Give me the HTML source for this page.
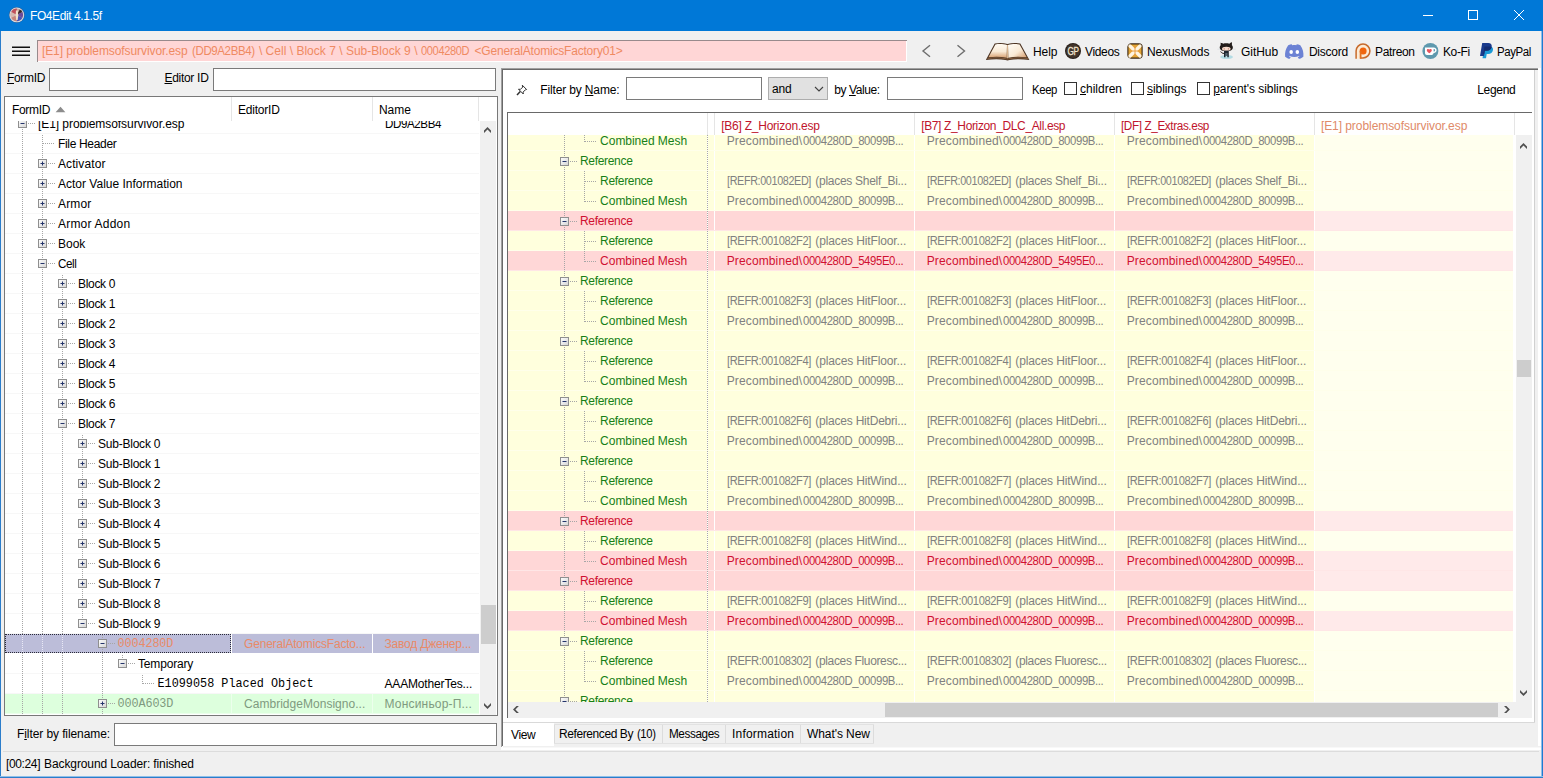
<!DOCTYPE html>
<html lang="en"><head><meta charset="utf-8"><title>FO4Edit 4.1.5f</title><style>
html,body{margin:0;padding:0}
body{width:1543px;height:778px;overflow:hidden;background:#f0f0f0;position:relative;font:12px/20px "Liberation Sans", "DejaVu Sans", sans-serif;color:#000}
body div,body svg,body span.t{position:absolute;display:block}
span.t{white-space:pre;height:20px;line-height:20px}
span.m{font-family:"Liberation Mono", "DejaVu Sans Mono", monospace;transform:scaleY(1.08);transform-origin:0 14px}
.clip{overflow:hidden}
u{text-decoration:underline;text-underline-offset:1px}
</style></head>
<body>
<svg style="left:0;top:0" width="0" height="0"><defs><linearGradient id="bg" x1="0" y1="0" x2="1" y2="1"><stop offset="0" stop-color="#fff"/><stop offset="1" stop-color="#d4d4d4"/></linearGradient></defs></svg>
<div style="left:0px;top:0px;width:1543px;height:31px;background:#0078d7;"></div>
<div style="left:0px;top:31px;width:1px;height:747px;background:#2b7dcb;"></div>
<div style="left:1542px;top:31px;width:1px;height:747px;background:#1f7ad0;"></div>
<div style="left:1541px;top:31px;width:1px;height:747px;background:#8dbde9;"></div>
<div style="left:0px;top:777px;width:1543px;height:1px;background:#2b7dcb;"></div>
<div style="left:0px;top:776px;width:1543px;height:1px;background:#8fbfe8;"></div>
<svg style="left:8px;top:6px" width="18" height="18" viewBox="0 0 18 18"><circle cx="8.800" cy="8.900" r="8" fill="#2a5f9a"/><circle cx="8.800" cy="8.900" r="7.400" fill="#d9dce0"/><circle cx="8.800" cy="8.900" r="6.300" fill="#c8a8a0"/><path d="M8.800 2.600a6.300 6.300 0 0 0-5.600 3.400l5.600 2.900z" fill="#c0505a"/><path d="M8.800 8.900l5.600-2.900a6.300 6.300 0 0 0-2.600-2.600z" fill="#3a2a2a"/><path d="M8.800 8.900l5.600 2.900a6.300 6.300 0 0 0 0-5.800z" fill="#6a4a9a"/><path d="M8.800 8.900v6.300a6.300 6.300 0 0 0 5.600-3.400z" fill="#4a55b5"/><path d="M8.800 8.900l-5.600 2.900a6.300 6.300 0 0 0 5.600 3.400z" fill="#c9857a"/><path d="M8.800 8.900L3.200 6a6.300 6.300 0 0 0 0 5.800z" fill="#d8b8b0"/><path d="M8 4.500h1.800l.5 5-.6 4.500H8.200L7.600 9.500z" fill="#f0e2cc"/></svg>
<span class="t" style="left:29.8px;top:6px;color:#fff;letter-spacing:-0.400px;transform:scaleX(0.9976);transform-origin:0 0;">FO4Edit 4.1.5f</span>
<svg style="left:1415px;top:0" width="128" height="31" viewBox="0 0 128 31" fill="none" stroke="#fff" stroke-width="1"><path d="M8 15.5h10"/><rect x="53.5" y="10.5" width="9" height="9"/><path d="M99 10l10 10M109 10l-10 10"/></svg>
<svg style="left:12px;top:46px" width="18" height="10" viewBox="0 0 18 10"><path d="M0 1.25h18M0 5.25h18M0 9.25h18" stroke="#111" stroke-width="1.300"/></svg>
<div style="left:37px;top:40px;width:870px;height:22px;background:#ffd6d6;box-shadow:inset 1px 1px 0 #988a8c,inset -1px -1px 0 #fff;"></div>
<span class="t" style="left:41.9px;top:41px;color:#ef8a62;letter-spacing:-0.088px;">[E1] problemsofsurvivor.esp</span>
<span class="t" style="left:191.8px;top:41px;color:#ef8a62;letter-spacing:-0.400px;transform:scaleX(0.9593);transform-origin:0 0;">(DD9A2BB4)</span>
<span class="t" style="left:258.9px;top:41px;color:#ef8a62;letter-spacing:0.017px;">\ Cell \ Block 7 \ Sub-Block 9 \</span>
<span class="t" style="left:420.9px;top:41px;color:#ef8a62;letter-spacing:-0.400px;transform:scaleX(0.9237);transform-origin:0 0;">0004280D</span>
<span class="t" style="left:474.5px;top:41px;color:#ef8a62;letter-spacing:-0.189px;">&lt;GeneralAtomicsFactory01&gt;</span>
<svg style="left:918px;top:42px" width="52" height="18" viewBox="0 0 52 18" fill="none" stroke="#6e6e6e" stroke-width="1.4"><path d="M12 3.2l-7 5.8 7 5.8"/><path d="M39.5 3.2l7 5.8-7 5.8"/></svg>
<svg style="left:985px;top:41px" width="46" height="20" viewBox="0 0 46 20">
<defs><linearGradient id="pgL" x1="0" y1="0" x2="0" y2="1"><stop offset="0" stop-color="#fffaf2"/><stop offset=".55" stop-color="#f9ead6"/><stop offset="1" stop-color="#d9a273"/></linearGradient>
<linearGradient id="pgR" x1="0" y1="0" x2="1" y2="1"><stop offset="0" stop-color="#fffdf8"/><stop offset=".55" stop-color="#f9ead6"/><stop offset="1" stop-color="#d39a6a"/></linearGradient></defs>
<path d="M.8 18.900L9.700 2.500C13.500 1.600 18.500 1.700 22.500 3 26.500 1.700 31.500 1.600 35.300 2.500L44.400 18.900C37 18.100 30 18.100 24.500 18.900L22.500 19.400 20.500 18.900C15 18.100 8 18.100 .8 18.900z" fill="#4c3423"/>
<path d="M3.500 16.300L10.400 3.400C14 2.700 18.500 2.800 22 4.100L21.700 16.700C16 15.500 9.500 15.400 3.500 16.300z" fill="url(#pgL)"/>
<path d="M41.700 16.300L34.600 3.400C31 2.700 26.500 2.800 23 4.100L23.300 16.700C29 15.500 35.500 15.400 41.700 16.300z" fill="url(#pgR)"/>
<path d="M22 4.100l-.3 12.600 .8 .9 .8-.9L23 4.100z" fill="#d6b38e"/>
<path d="M2.600 17.500c6.200-1 13-.9 18.900 .4h2c5.900-1.300 12.700-1.400 19.300-.4" stroke="#8b623f" stroke-width=".9" fill="none"/>
</svg>
<span class="t" style="left:1033.0px;top:42px;letter-spacing:-0.045px;">Help</span>
<svg style="left:1065px;top:43px" width="16" height="16" viewBox="0 0 16 16"><circle cx="8" cy="8" r="8" fill="#2a201a"/><circle cx="8" cy="8" r="6.900" fill="#43352b"/><text transform="translate(8 11.700) scale(.78 1)" text-anchor="middle" font-family="Liberation Sans, sans-serif" font-size="10.500" fill="#f2e6d0" stroke="#f2e6d0" stroke-width=".3" letter-spacing="-0.5">GP</text></svg>
<span class="t" style="left:1085.1px;top:42px;letter-spacing:-0.379px;">Videos</span>
<svg style="left:1127px;top:43px" width="16" height="16" viewBox="0 0 16 16"><defs><radialGradient id="nx" cx=".5" cy=".5" r=".6"><stop offset="0" stop-color="#f0a848"/><stop offset="1" stop-color="#dba22e"/></radialGradient></defs><rect x=".9" y=".9" width="14.200" height="14.200" rx="3.200" fill="url(#nx)" stroke="#3a2614" stroke-width="1.100"/><path d="M3 3l10 10M13 3L3 13" stroke="#fff4e2" stroke-width="3.200" stroke-linecap="round"/><path d="M8 3v10M3 8h10" stroke="#e89a3a" stroke-width=".9"/></svg>
<span class="t" style="left:1147.0px;top:42px;letter-spacing:-0.117px;">NexusMods</span>
<svg style="left:1217px;top:40px" width="20" height="20" viewBox="0 0 20 20"><ellipse cx="9.600" cy="17" rx="6.400" ry="2" fill="#b4dce4"/><path d="M3.800 2l2.300 1.700c1.900-.5 4.300-.5 6.200 0L14.600 2c.5 1.300 .5 2.300 .2 3.100 .9 1 1.200 2 1 3.200-.4 2.100-2.600 2.800-6.500 2.800s-6.100-.7-6.500-2.800c-.2-1.200 .1-2.200 1-3.200-.3-.8-.3-1.800 .2-3.100z" fill="#221c1a"/><ellipse cx="9.300" cy="8.700" rx="4.300" ry="2" fill="#f7dccd"/><ellipse cx="7.200" cy="8.800" rx=".6" ry=".9" fill="#c58b7c"/><ellipse cx="11.400" cy="8.800" rx=".6" ry=".9" fill="#c58b7c"/><path d="M7 10.800h4.800v6.400h-1.500v-1.500h-1.800v1.500H7z" fill="#1d2730"/><rect x="8.300" y="13" width="2.200" height="3" fill="#56646e"/><path d="M7.200 13.400c-1.900 .3-2.300-.9-3.700-1.700" stroke="#221c1a" stroke-width="1" fill="none"/><path d="M.5 9.200h2.500M16.200 9.200h2.500" stroke="#cdd6da" stroke-width=".5"/></svg>
<span class="t" style="left:1241.0px;top:42px;letter-spacing:-0.058px;">GitHub</span>
<svg style="left:1284px;top:44px" width="20.500" height="15" viewBox="0 0 22 16"><path d="M4.500 1.300C6 .6 7.300 .3 8.300 .2l.5 1c1.500-.2 2.900-.2 4.400 0l.5-1c1 .1 2.300 .4 3.800 1.100 2.800 4 3.700 8 3.300 12.200-1.700 1.300-3.300 2-4.900 2.400l-1.100-1.800c.7-.2 1.300-.5 1.900-.9l-.5-.3c-3.300 1.500-6.900 1.500-10.400 0l-.5 .3c.6 .4 1.200 .7 1.900 .9l-1.100 1.800c-1.600-.4-3.200-1.100-4.900-2.400C.8 9.300 1.700 5.300 4.500 1.300z" fill="#6c82d4"/><ellipse cx="7.700" cy="8.600" rx="1.900" ry="2.100" fill="#fff"/><ellipse cx="14.300" cy="8.600" rx="1.900" ry="2.100" fill="#fff"/></svg>
<span class="t" style="left:1308.9px;top:42px;letter-spacing:-0.225px;">Discord</span>
<svg style="left:1354px;top:42px" width="18" height="18" viewBox="0 0 18 18"><path d="M2 16.700V9a7 7 0 1 1 7 7H6v.7z" fill="#fcebd6"/><path d="M2.100 16.700V9a6.900 6.900 0 1 1 6.900 6.900H6.100" fill="none" stroke="#c76a2b" stroke-width="1.500"/><circle cx="9.100" cy="9" r="3.500" fill="#f0650e"/><path d="M5.700 9h1.800v7.700H5.700z" fill="#e4711e"/></svg>
<span class="t" style="left:1375.1px;top:42px;letter-spacing:-0.347px;">Patreon</span>
<svg style="left:1422px;top:43px" width="17" height="16" viewBox="0 0 17 16"><circle cx="8.400" cy="8" r="8" fill="#5f99ae"/><path d="M3 4.600h8.300c2.600 0 3.300 1.500 3.300 2.700s-.9 2.700-3 2.700c-.3 1.400-1.200 2-2.400 2H5c-1.300 0-2-.8-2-2z" fill="#fff"/><path d="M11.600 6v2.600c.9 0 1.500-.5 1.500-1.300S12.500 6 11.600 6z" fill="#5f99ae"/><path d="M7.300 10.300C5.700 9 4.800 8.200 4.800 7.200c0-.8.600-1.300 1.300-1.300.5 0 .9.200 1.200.7.300-.5.700-.7 1.200-.7.700 0 1.300.5 1.300 1.300 0 1-.9 1.800-2.500 3.100z" fill="#e8525c"/></svg>
<span class="t" style="left:1443.0px;top:42px;letter-spacing:-0.394px;">Ko-Fi</span>
<svg style="left:1479px;top:42px" width="15" height="17" viewBox="0 0 15 17"><path d="M5.500 4.500h5.200c2.400 0 3.700 1.400 3.300 3.600-.5 2.700-2.300 3.900-4.800 3.900H7.700L7 16.300H3.500z" fill="#1a9ad6"/><path d="M3.200 1h6c2.500 0 3.900 1.400 3.500 3.700-.5 2.800-2.400 4-5 4H5.800L5 14H1z" fill="#1a3a8c"/><path d="M5.500 4.500h5.200c.8 0 1.500.2 2 .5-.6 2.600-2.500 3.700-5 3.700H5.800l-.6 3.300h-.9z" fill="#142c70"/></svg>
<span class="t" style="left:1497.0px;top:42px;letter-spacing:-0.400px;transform:scaleX(0.9545);transform-origin:0 0;">PayPal</span>
<span class="t" style="left:7.0px;top:68px;letter-spacing:-0.333px;"><u>F</u>ormID</span>
<div style="left:49px;top:68px;width:89px;height:23px;background:#fff;box-shadow:inset 0 0 0 1px #7a7a7a;"></div>
<span class="t" style="left:164.5px;top:68px;letter-spacing:-0.298px;"><u>E</u>ditor ID</span>
<div style="left:213px;top:68px;width:283px;height:23px;background:#fff;box-shadow:inset 0 0 0 1px #7a7a7a;"></div>
<div style="left:4px;top:96px;width:494px;height:620px;background:#fff;box-shadow:inset 0 0 0 1px #787878;"></div>
<div class="clip" style="left:5px;top:121px;width:475px;height:594px">
<div style="left:0;top:12px;width:474px;height:1px;background:#f7f7f7"></div>
<div style="left:0;top:32px;width:474px;height:1px;background:#f7f7f7"></div>
<div style="left:0;top:52px;width:474px;height:1px;background:#f7f7f7"></div>
<div style="left:0;top:72px;width:474px;height:1px;background:#f7f7f7"></div>
<div style="left:0;top:92px;width:474px;height:1px;background:#f7f7f7"></div>
<div style="left:0;top:112px;width:474px;height:1px;background:#f7f7f7"></div>
<div style="left:0;top:132px;width:474px;height:1px;background:#f7f7f7"></div>
<div style="left:0;top:152px;width:474px;height:1px;background:#f7f7f7"></div>
<div style="left:0;top:172px;width:474px;height:1px;background:#f7f7f7"></div>
<div style="left:0;top:192px;width:474px;height:1px;background:#f7f7f7"></div>
<div style="left:0;top:212px;width:474px;height:1px;background:#f7f7f7"></div>
<div style="left:0;top:232px;width:474px;height:1px;background:#f7f7f7"></div>
<div style="left:0;top:252px;width:474px;height:1px;background:#f7f7f7"></div>
<div style="left:0;top:272px;width:474px;height:1px;background:#f7f7f7"></div>
<div style="left:0;top:292px;width:474px;height:1px;background:#f7f7f7"></div>
<div style="left:0;top:312px;width:474px;height:1px;background:#f7f7f7"></div>
<div style="left:0;top:332px;width:474px;height:1px;background:#f7f7f7"></div>
<div style="left:0;top:352px;width:474px;height:1px;background:#f7f7f7"></div>
<div style="left:0;top:372px;width:474px;height:1px;background:#f7f7f7"></div>
<div style="left:0;top:392px;width:474px;height:1px;background:#f7f7f7"></div>
<div style="left:0;top:412px;width:474px;height:1px;background:#f7f7f7"></div>
<div style="left:0;top:432px;width:474px;height:1px;background:#f7f7f7"></div>
<div style="left:0;top:452px;width:474px;height:1px;background:#f7f7f7"></div>
<div style="left:0;top:472px;width:474px;height:1px;background:#f7f7f7"></div>
<div style="left:0;top:492px;width:474px;height:1px;background:#f7f7f7"></div>
<div style="left:0;top:512px;width:474px;height:1px;background:#f7f7f7"></div>
<div style="left:0px;top:513px;width:226px;height:19px;background:#bcbdd9;outline:1px dotted #2a2a38;outline-offset:-1px"></div>
<div style="left:227px;top:513px;width:140px;height:19px;background:#bcbdd9"></div>
<div style="left:368px;top:513px;width:106px;height:19px;background:#bcbdd9"></div>
<div style="left:0;top:552px;width:474px;height:1px;background:#f7f7f7"></div>
<div style="left:0;top:572px;width:474px;height:1px;background:#f7f7f7"></div>
<div style="left:0;top:573px;width:474px;height:20px;background:#ecffec"></div>
<div style="left:0px;top:573px;width:226px;height:19px;background:#ddffdd"></div>
<div style="left:227px;top:573px;width:140px;height:19px;background:#ddffdd"></div>
<div style="left:368px;top:573px;width:106px;height:19px;background:#ddffdd"></div>
<div style="left:17px;top:8px;width:1px;height:585px;background:repeating-linear-gradient(to bottom,#a6a6a6 0 1px,transparent 1px 2px);background-position:0 0px"></div>
<div style="left:37px;top:13px;width:1px;height:580px;background:repeating-linear-gradient(to bottom,#a6a6a6 0 1px,transparent 1px 2px);background-position:0 -1px"></div>
<div style="left:57px;top:153px;width:1px;height:440px;background:repeating-linear-gradient(to bottom,#a6a6a6 0 1px,transparent 1px 2px);background-position:0 -1px"></div>
<div style="left:77px;top:313px;width:1px;height:190px;background:repeating-linear-gradient(to bottom,#a6a6a6 0 1px,transparent 1px 2px);background-position:0 -1px"></div>
<div style="left:97px;top:513px;width:1px;height:80px;background:repeating-linear-gradient(to bottom,#a6a6a6 0 1px,transparent 1px 2px);background-position:0 -1px"></div>
<div style="left:117px;top:533px;width:1px;height:10px;background:repeating-linear-gradient(to bottom,#a6a6a6 0 1px,transparent 1px 2px);background-position:0 -1px"></div>
<div style="left:137px;top:553px;width:1px;height:10px;background:repeating-linear-gradient(to bottom,#a6a6a6 0 1px,transparent 1px 2px);background-position:0 -1px"></div>
<div style="left:17px;top:514px;width:1px;height:17px;background:repeating-linear-gradient(to bottom,#e9e9f6 0 1px,transparent 1px 2px);background-position:0 0px"></div>
<div style="left:37px;top:514px;width:1px;height:17px;background:repeating-linear-gradient(to bottom,#e9e9f6 0 1px,transparent 1px 2px);background-position:0 0px"></div>
<div style="left:57px;top:514px;width:1px;height:17px;background:repeating-linear-gradient(to bottom,#e9e9f6 0 1px,transparent 1px 2px);background-position:0 0px"></div>
<div style="left:23px;top:2px;width:7px;height:1px;background:repeating-linear-gradient(to right,#a6a6a6 0 1px,transparent 1px 2px)"></div>
<svg style="left:13px;top:-2px" width="9" height="9" viewBox="0 0 9 9"><rect x=".5" y=".5" width="8" height="8" fill="url(#bg)" stroke="#8f8f8f"/><g stroke="#24356b" stroke-width="1" fill="none"><path d="M2.500 4.500h4"/></g></svg>
<span class="t" style="left:33.0px;top:-7px;letter-spacing:-0.062px;">[E1] problemsofsurvivor.esp</span>
<div style="left:38px;top:22px;width:12px;height:1px;background:repeating-linear-gradient(to right,#a6a6a6 0 1px,transparent 1px 2px)"></div>
<span class="t" style="left:53.0px;top:13px;letter-spacing:-0.330px;">File Header</span>
<div style="left:43px;top:42px;width:7px;height:1px;background:repeating-linear-gradient(to right,#a6a6a6 0 1px,transparent 1px 2px)"></div>
<svg style="left:33px;top:38px" width="9" height="9" viewBox="0 0 9 9"><rect x=".5" y=".5" width="8" height="8" fill="url(#bg)" stroke="#8f8f8f"/><g stroke="#24356b" stroke-width="1" fill="none"><path d="M2.500 4.500h4"/><path d="M4.500 2.500v4"/></g></svg>
<span class="t" style="left:53.0px;top:33px;letter-spacing:0.091px;">Activator</span>
<div style="left:43px;top:62px;width:7px;height:1px;background:repeating-linear-gradient(to right,#a6a6a6 0 1px,transparent 1px 2px)"></div>
<svg style="left:33px;top:58px" width="9" height="9" viewBox="0 0 9 9"><rect x=".5" y=".5" width="8" height="8" fill="url(#bg)" stroke="#8f8f8f"/><g stroke="#24356b" stroke-width="1" fill="none"><path d="M2.500 4.500h4"/><path d="M4.500 2.500v4"/></g></svg>
<span class="t" style="left:53.0px;top:53px;letter-spacing:-0.000px;">Actor Value Information</span>
<div style="left:43px;top:82px;width:7px;height:1px;background:repeating-linear-gradient(to right,#a6a6a6 0 1px,transparent 1px 2px)"></div>
<svg style="left:33px;top:78px" width="9" height="9" viewBox="0 0 9 9"><rect x=".5" y=".5" width="8" height="8" fill="url(#bg)" stroke="#8f8f8f"/><g stroke="#24356b" stroke-width="1" fill="none"><path d="M2.500 4.500h4"/><path d="M4.500 2.500v4"/></g></svg>
<span class="t" style="left:53.0px;top:73px;letter-spacing:0.167px;">Armor</span>
<div style="left:43px;top:102px;width:7px;height:1px;background:repeating-linear-gradient(to right,#a6a6a6 0 1px,transparent 1px 2px)"></div>
<svg style="left:33px;top:98px" width="9" height="9" viewBox="0 0 9 9"><rect x=".5" y=".5" width="8" height="8" fill="url(#bg)" stroke="#8f8f8f"/><g stroke="#24356b" stroke-width="1" fill="none"><path d="M2.500 4.500h4"/><path d="M4.500 2.500v4"/></g></svg>
<span class="t" style="left:53.0px;top:93px;letter-spacing:0.209px;">Armor Addon</span>
<div style="left:43px;top:122px;width:7px;height:1px;background:repeating-linear-gradient(to right,#a6a6a6 0 1px,transparent 1px 2px)"></div>
<svg style="left:33px;top:118px" width="9" height="9" viewBox="0 0 9 9"><rect x=".5" y=".5" width="8" height="8" fill="url(#bg)" stroke="#8f8f8f"/><g stroke="#24356b" stroke-width="1" fill="none"><path d="M2.500 4.500h4"/><path d="M4.500 2.500v4"/></g></svg>
<span class="t" style="left:53.0px;top:113px;letter-spacing:-0.013px;">Book</span>
<div style="left:43px;top:142px;width:7px;height:1px;background:repeating-linear-gradient(to right,#a6a6a6 0 1px,transparent 1px 2px)"></div>
<svg style="left:33px;top:138px" width="9" height="9" viewBox="0 0 9 9"><rect x=".5" y=".5" width="8" height="8" fill="url(#bg)" stroke="#8f8f8f"/><g stroke="#24356b" stroke-width="1" fill="none"><path d="M2.500 4.500h4"/></g></svg>
<span class="t" style="left:53.0px;top:133px;letter-spacing:-0.400px;transform:scaleX(0.9700);transform-origin:0 0;">Cell</span>
<div style="left:63px;top:162px;width:7px;height:1px;background:repeating-linear-gradient(to right,#a6a6a6 0 1px,transparent 1px 2px)"></div>
<svg style="left:53px;top:158px" width="9" height="9" viewBox="0 0 9 9"><rect x=".5" y=".5" width="8" height="8" fill="url(#bg)" stroke="#8f8f8f"/><g stroke="#24356b" stroke-width="1" fill="none"><path d="M2.500 4.500h4"/><path d="M4.500 2.500v4"/></g></svg>
<span class="t" style="left:73.0px;top:153px;letter-spacing:-0.322px;">Block 0</span>
<div style="left:63px;top:182px;width:7px;height:1px;background:repeating-linear-gradient(to right,#a6a6a6 0 1px,transparent 1px 2px)"></div>
<svg style="left:53px;top:178px" width="9" height="9" viewBox="0 0 9 9"><rect x=".5" y=".5" width="8" height="8" fill="url(#bg)" stroke="#8f8f8f"/><g stroke="#24356b" stroke-width="1" fill="none"><path d="M2.500 4.500h4"/><path d="M4.500 2.500v4"/></g></svg>
<span class="t" style="left:73.0px;top:173px;letter-spacing:-0.322px;">Block 1</span>
<div style="left:63px;top:202px;width:7px;height:1px;background:repeating-linear-gradient(to right,#a6a6a6 0 1px,transparent 1px 2px)"></div>
<svg style="left:53px;top:198px" width="9" height="9" viewBox="0 0 9 9"><rect x=".5" y=".5" width="8" height="8" fill="url(#bg)" stroke="#8f8f8f"/><g stroke="#24356b" stroke-width="1" fill="none"><path d="M2.500 4.500h4"/><path d="M4.500 2.500v4"/></g></svg>
<span class="t" style="left:73.0px;top:193px;letter-spacing:-0.322px;">Block 2</span>
<div style="left:63px;top:222px;width:7px;height:1px;background:repeating-linear-gradient(to right,#a6a6a6 0 1px,transparent 1px 2px)"></div>
<svg style="left:53px;top:218px" width="9" height="9" viewBox="0 0 9 9"><rect x=".5" y=".5" width="8" height="8" fill="url(#bg)" stroke="#8f8f8f"/><g stroke="#24356b" stroke-width="1" fill="none"><path d="M2.500 4.500h4"/><path d="M4.500 2.500v4"/></g></svg>
<span class="t" style="left:73.0px;top:213px;letter-spacing:-0.322px;">Block 3</span>
<div style="left:63px;top:242px;width:7px;height:1px;background:repeating-linear-gradient(to right,#a6a6a6 0 1px,transparent 1px 2px)"></div>
<svg style="left:53px;top:238px" width="9" height="9" viewBox="0 0 9 9"><rect x=".5" y=".5" width="8" height="8" fill="url(#bg)" stroke="#8f8f8f"/><g stroke="#24356b" stroke-width="1" fill="none"><path d="M2.500 4.500h4"/><path d="M4.500 2.500v4"/></g></svg>
<span class="t" style="left:73.0px;top:233px;letter-spacing:-0.322px;">Block 4</span>
<div style="left:63px;top:262px;width:7px;height:1px;background:repeating-linear-gradient(to right,#a6a6a6 0 1px,transparent 1px 2px)"></div>
<svg style="left:53px;top:258px" width="9" height="9" viewBox="0 0 9 9"><rect x=".5" y=".5" width="8" height="8" fill="url(#bg)" stroke="#8f8f8f"/><g stroke="#24356b" stroke-width="1" fill="none"><path d="M2.500 4.500h4"/><path d="M4.500 2.500v4"/></g></svg>
<span class="t" style="left:73.0px;top:253px;letter-spacing:-0.322px;">Block 5</span>
<div style="left:63px;top:282px;width:7px;height:1px;background:repeating-linear-gradient(to right,#a6a6a6 0 1px,transparent 1px 2px)"></div>
<svg style="left:53px;top:278px" width="9" height="9" viewBox="0 0 9 9"><rect x=".5" y=".5" width="8" height="8" fill="url(#bg)" stroke="#8f8f8f"/><g stroke="#24356b" stroke-width="1" fill="none"><path d="M2.500 4.500h4"/><path d="M4.500 2.500v4"/></g></svg>
<span class="t" style="left:73.0px;top:273px;letter-spacing:-0.322px;">Block 6</span>
<div style="left:63px;top:302px;width:7px;height:1px;background:repeating-linear-gradient(to right,#a6a6a6 0 1px,transparent 1px 2px)"></div>
<svg style="left:53px;top:298px" width="9" height="9" viewBox="0 0 9 9"><rect x=".5" y=".5" width="8" height="8" fill="url(#bg)" stroke="#8f8f8f"/><g stroke="#24356b" stroke-width="1" fill="none"><path d="M2.500 4.500h4"/></g></svg>
<span class="t" style="left:73.0px;top:293px;letter-spacing:-0.322px;">Block 7</span>
<div style="left:83px;top:322px;width:7px;height:1px;background:repeating-linear-gradient(to right,#a6a6a6 0 1px,transparent 1px 2px)"></div>
<svg style="left:73px;top:318px" width="9" height="9" viewBox="0 0 9 9"><rect x=".5" y=".5" width="8" height="8" fill="url(#bg)" stroke="#8f8f8f"/><g stroke="#24356b" stroke-width="1" fill="none"><path d="M2.500 4.500h4"/><path d="M4.500 2.500v4"/></g></svg>
<span class="t" style="left:93.0px;top:313px;letter-spacing:-0.227px;">Sub-Block 0</span>
<div style="left:83px;top:342px;width:7px;height:1px;background:repeating-linear-gradient(to right,#a6a6a6 0 1px,transparent 1px 2px)"></div>
<svg style="left:73px;top:338px" width="9" height="9" viewBox="0 0 9 9"><rect x=".5" y=".5" width="8" height="8" fill="url(#bg)" stroke="#8f8f8f"/><g stroke="#24356b" stroke-width="1" fill="none"><path d="M2.500 4.500h4"/><path d="M4.500 2.500v4"/></g></svg>
<span class="t" style="left:93.0px;top:333px;letter-spacing:-0.227px;">Sub-Block 1</span>
<div style="left:83px;top:362px;width:7px;height:1px;background:repeating-linear-gradient(to right,#a6a6a6 0 1px,transparent 1px 2px)"></div>
<svg style="left:73px;top:358px" width="9" height="9" viewBox="0 0 9 9"><rect x=".5" y=".5" width="8" height="8" fill="url(#bg)" stroke="#8f8f8f"/><g stroke="#24356b" stroke-width="1" fill="none"><path d="M2.500 4.500h4"/><path d="M4.500 2.500v4"/></g></svg>
<span class="t" style="left:93.0px;top:353px;letter-spacing:-0.227px;">Sub-Block 2</span>
<div style="left:83px;top:382px;width:7px;height:1px;background:repeating-linear-gradient(to right,#a6a6a6 0 1px,transparent 1px 2px)"></div>
<svg style="left:73px;top:378px" width="9" height="9" viewBox="0 0 9 9"><rect x=".5" y=".5" width="8" height="8" fill="url(#bg)" stroke="#8f8f8f"/><g stroke="#24356b" stroke-width="1" fill="none"><path d="M2.500 4.500h4"/><path d="M4.500 2.500v4"/></g></svg>
<span class="t" style="left:93.0px;top:373px;letter-spacing:-0.227px;">Sub-Block 3</span>
<div style="left:83px;top:402px;width:7px;height:1px;background:repeating-linear-gradient(to right,#a6a6a6 0 1px,transparent 1px 2px)"></div>
<svg style="left:73px;top:398px" width="9" height="9" viewBox="0 0 9 9"><rect x=".5" y=".5" width="8" height="8" fill="url(#bg)" stroke="#8f8f8f"/><g stroke="#24356b" stroke-width="1" fill="none"><path d="M2.500 4.500h4"/><path d="M4.500 2.500v4"/></g></svg>
<span class="t" style="left:93.0px;top:393px;letter-spacing:-0.227px;">Sub-Block 4</span>
<div style="left:83px;top:422px;width:7px;height:1px;background:repeating-linear-gradient(to right,#a6a6a6 0 1px,transparent 1px 2px)"></div>
<svg style="left:73px;top:418px" width="9" height="9" viewBox="0 0 9 9"><rect x=".5" y=".5" width="8" height="8" fill="url(#bg)" stroke="#8f8f8f"/><g stroke="#24356b" stroke-width="1" fill="none"><path d="M2.500 4.500h4"/><path d="M4.500 2.500v4"/></g></svg>
<span class="t" style="left:93.0px;top:413px;letter-spacing:-0.227px;">Sub-Block 5</span>
<div style="left:83px;top:442px;width:7px;height:1px;background:repeating-linear-gradient(to right,#a6a6a6 0 1px,transparent 1px 2px)"></div>
<svg style="left:73px;top:438px" width="9" height="9" viewBox="0 0 9 9"><rect x=".5" y=".5" width="8" height="8" fill="url(#bg)" stroke="#8f8f8f"/><g stroke="#24356b" stroke-width="1" fill="none"><path d="M2.500 4.500h4"/><path d="M4.500 2.500v4"/></g></svg>
<span class="t" style="left:93.0px;top:433px;letter-spacing:-0.227px;">Sub-Block 6</span>
<div style="left:83px;top:462px;width:7px;height:1px;background:repeating-linear-gradient(to right,#a6a6a6 0 1px,transparent 1px 2px)"></div>
<svg style="left:73px;top:458px" width="9" height="9" viewBox="0 0 9 9"><rect x=".5" y=".5" width="8" height="8" fill="url(#bg)" stroke="#8f8f8f"/><g stroke="#24356b" stroke-width="1" fill="none"><path d="M2.500 4.500h4"/><path d="M4.500 2.500v4"/></g></svg>
<span class="t" style="left:93.0px;top:453px;letter-spacing:-0.227px;">Sub-Block 7</span>
<div style="left:83px;top:482px;width:7px;height:1px;background:repeating-linear-gradient(to right,#a6a6a6 0 1px,transparent 1px 2px)"></div>
<svg style="left:73px;top:478px" width="9" height="9" viewBox="0 0 9 9"><rect x=".5" y=".5" width="8" height="8" fill="url(#bg)" stroke="#8f8f8f"/><g stroke="#24356b" stroke-width="1" fill="none"><path d="M2.500 4.500h4"/><path d="M4.500 2.500v4"/></g></svg>
<span class="t" style="left:93.0px;top:473px;letter-spacing:-0.227px;">Sub-Block 8</span>
<div style="left:83px;top:502px;width:7px;height:1px;background:repeating-linear-gradient(to right,#a6a6a6 0 1px,transparent 1px 2px)"></div>
<svg style="left:73px;top:498px" width="9" height="9" viewBox="0 0 9 9"><rect x=".5" y=".5" width="8" height="8" fill="url(#bg)" stroke="#8f8f8f"/><g stroke="#24356b" stroke-width="1" fill="none"><path d="M2.500 4.500h4"/></g></svg>
<span class="t" style="left:93.0px;top:493px;letter-spacing:-0.227px;">Sub-Block 9</span>
<div style="left:103px;top:522px;width:7px;height:1px;background:repeating-linear-gradient(to right,#a6a6a6 0 1px,transparent 1px 2px)"></div>
<svg style="left:93px;top:518px" width="9" height="9" viewBox="0 0 9 9"><rect x=".5" y=".5" width="8" height="8" fill="url(#bg)" stroke="#8f8f8f"/><g stroke="#24356b" stroke-width="1" fill="none"><path d="M2.500 4.500h4"/></g></svg>
<span class="t m" style="left:112.5px;top:513px;color:#e98a68;font-size:11.8px;letter-spacing:-0.104px;">0004280D</span>
<div style="left:123px;top:542px;width:7px;height:1px;background:repeating-linear-gradient(to right,#a6a6a6 0 1px,transparent 1px 2px)"></div>
<svg style="left:113px;top:538px" width="9" height="9" viewBox="0 0 9 9"><rect x=".5" y=".5" width="8" height="8" fill="url(#bg)" stroke="#8f8f8f"/><g stroke="#24356b" stroke-width="1" fill="none"><path d="M2.500 4.500h4"/></g></svg>
<span class="t" style="left:133.0px;top:533px;letter-spacing:-0.165px;">Temporary</span>
<div style="left:138px;top:562px;width:12px;height:1px;background:repeating-linear-gradient(to right,#a6a6a6 0 1px,transparent 1px 2px)"></div>
<span class="t m" style="left:152.5px;top:553px;font-size:11.8px;letter-spacing:0.012px;">E1099058 Placed Object</span>
<div style="left:103px;top:582px;width:7px;height:1px;background:repeating-linear-gradient(to right,#a6a6a6 0 1px,transparent 1px 2px)"></div>
<svg style="left:93px;top:578px" width="9" height="9" viewBox="0 0 9 9"><rect x=".5" y=".5" width="8" height="8" fill="url(#bg)" stroke="#8f8f8f"/><g stroke="#24356b" stroke-width="1" fill="none"><path d="M2.500 4.500h4"/><path d="M4.500 2.500v4"/></g></svg>
<span class="t m" style="left:112.5px;top:573px;color:#7f9a7f;font-size:11.8px;letter-spacing:-0.104px;">000A603D</span>
<span class="t" style="left:379.5px;top:-7px;letter-spacing:-0.400px;transform:scaleX(0.9628);transform-origin:0 0;">DD9A2BB4</span>
<span class="t" style="left:239.0px;top:513px;color:#e98a68;letter-spacing:-0.185px;">GeneralAtomicsFacto...</span>
<span class="t" style="left:379.5px;top:513px;color:#e98a68;letter-spacing:-0.201px;">Завод Дженер...</span>
<span class="t" style="left:379.5px;top:553px;letter-spacing:-0.162px;">AAAMotherTes...</span>
<span class="t" style="left:239.0px;top:573px;color:#7f9a7f;letter-spacing:0.029px;">CambridgeMonsigno...</span>
<span class="t" style="left:379.5px;top:573px;color:#7f9a7f;letter-spacing:0.187px;">Монсиньор-П...</span>
</div>
<div style="left:5px;top:97px;width:492px;height:24px;background:#fff;"></div>
<div style="left:231px;top:97px;width:1px;height:24px;background:#e5e5e5;"></div>
<div style="left:372px;top:97px;width:1px;height:24px;background:#e5e5e5;"></div>
<div style="left:478px;top:97px;width:1px;height:24px;background:#e5e5e5;"></div>
<span class="t" style="left:12.0px;top:100px;letter-spacing:-0.333px;">FormID</span>
<svg style="left:55px;top:106px" width="11" height="7" viewBox="0 0 11 7"><path d="M.6 6.200L5.500 .8l4.900 5.400z" fill="#8c8c8c"/></svg>
<span class="t" style="left:238.1px;top:100px;letter-spacing:-0.231px;">EditorID</span>
<span class="t" style="left:378.9px;top:100px;letter-spacing:-0.002px;">Name</span>
<div style="left:480px;top:121px;width:16px;height:594px;background:#f0f0f0;"></div>
<div style="left:481px;top:605px;width:15px;height:39px;background:#cdcdcd;"></div>
<svg style="left:484px;top:127px" width="7" height="6" viewBox="0 0 7 6"><path d="M0 3.500L3.500 0 7 3.500V5.900L3.500 2.400 0 5.900z" fill="#505050"/></svg>
<svg style="left:484px;top:702.8px" width="7" height="6" viewBox="0 0 7 6"><path d="M0 2.400L3.500 5.900 7 2.400V0L3.500 3.500 0 0z" fill="#505050"/></svg>
<span class="t" style="left:17.0px;top:724px;letter-spacing:-0.089px;">F<u>i</u>lter by filename:</span>
<div style="left:114px;top:723px;width:383px;height:23px;background:#fff;box-shadow:inset 0 0 0 1px #7a7a7a;"></div>
<div style="left:3px;top:751px;width:1536px;height:1px;background:#dcdcdc;"></div>
<span class="t" style="left:6.0px;top:754px;letter-spacing:-0.371px;">[00:24]</span>
<span class="t" style="left:44.1px;top:754px;letter-spacing:-0.114px;">Background Loader: finished</span>
<div style="left:501px;top:68px;width:1040px;height:682px;background:#fff;"></div>
<div style="left:501px;top:68px;width:1037px;height:1px;background:#a0a0a0;"></div>
<div style="left:501px;top:68px;width:1px;height:679px;background:#a0a0a0;"></div>
<div style="left:502px;top:69px;width:1036px;height:1px;background:#696969;"></div>
<div style="left:502px;top:69px;width:1px;height:677px;background:#696969;"></div>
<div style="left:503px;top:746px;width:1038px;height:1px;background:#f0f0f0;"></div>
<div style="left:1535px;top:70px;width:3px;height:677px;background:#f0f0f0;"></div>
<div style="left:503px;top:747px;width:1038px;height:1px;background:#f8f8f8;"></div>
<div style="left:503px;top:70px;width:1px;height:653px;background:#fff;"></div>
<div style="left:1534px;top:70px;width:1px;height:653px;background:#d0d0d0;"></div>
<div style="left:503px;top:722px;width:1032px;height:1px;background:#d9d9d9;"></div>
<div style="left:503px;top:723px;width:1035px;height:23px;background:#f0f0f0;"></div>
<div style="left:503px;top:723px;width:51px;height:23px;background:#fff;"></div>
<div style="left:554px;top:724px;width:1px;height:20px;background:#dcdcdc;"></div>
<div style="left:662px;top:724px;width:1px;height:20px;background:#dcdcdc;"></div>
<div style="left:725px;top:724px;width:1px;height:20px;background:#dcdcdc;"></div>
<div style="left:800px;top:724px;width:1px;height:20px;background:#dcdcdc;"></div>
<div style="left:873px;top:724px;width:1px;height:20px;background:#dcdcdc;"></div>
<div style="left:554px;top:724px;width:320px;height:1px;background:#e2e2e2;"></div>
<div style="left:554px;top:743px;width:320px;height:1px;background:#e2e2e2;"></div>
<span class="t" style="left:511.0px;top:725px;letter-spacing:-0.373px;">View</span>
<span class="t" style="left:559.1px;top:724px;letter-spacing:-0.400px;transform:scaleX(0.9976);transform-origin:0 0;">Referenced By</span>
<span class="t" style="left:637.3px;top:724px;letter-spacing:-0.400px;transform:scaleX(0.9372);transform-origin:0 0;">(10)</span>
<span class="t" style="left:669.2px;top:724px;letter-spacing:-0.400px;transform:scaleX(0.9769);transform-origin:0 0;">Messages</span>
<span class="t" style="left:732.0px;top:724px;letter-spacing:0.197px;">Information</span>
<span class="t" style="left:807.0px;top:724px;letter-spacing:-0.084px;">What&#x27;s New</span>
<svg style="left:516px;top:84px" width="12" height="12" viewBox="0 0 12 12" fill="none" stroke="#303030" stroke-width="1"><path d="M6.300 1.200l4.300 4.300-1.200 .3-2.300 2.300 .2 1.900-4.800-4.800 1.900 .2 2.300-2.300z" fill="#fff"/><path d="M4.300 7.600L1 11" stroke-width="1.500"/></svg>
<span class="t" style="left:540.2px;top:80px;letter-spacing:-0.137px;">Filter by <u>N</u>ame:</span>
<div style="left:626px;top:77px;width:136px;height:23px;background:#fff;box-shadow:inset 0 0 0 1px #7a7a7a;"></div>
<div style="left:768px;top:77px;width:60px;height:23px;background:#e1e1e1;box-shadow:inset 0 0 0 1px #adadad;"></div>
<span class="t" style="left:772.0px;top:79px;letter-spacing:-0.174px;">and</span>
<svg style="left:814px;top:85px" width="10" height="8" viewBox="0 0 10 8"><path d="M1 2l4 4 4-4" fill="none" stroke="#404040" stroke-width="1.100"/></svg>
<span class="t" style="left:834.2px;top:80px;letter-spacing:-0.394px;">by <u>V</u>alue:</span>
<div style="left:887px;top:77px;width:136px;height:23px;background:#fff;box-shadow:inset 0 0 0 1px #7a7a7a;"></div>
<span class="t" style="left:1032.0px;top:80px;letter-spacing:-0.400px;transform:scaleX(0.9461);transform-origin:0 0;">Keep</span>
<div style="left:1064px;top:82px;width:13px;height:13px;background:#fff;box-shadow:inset 0 0 0 1px #333;"></div>
<div style="left:1131px;top:82px;width:13px;height:13px;background:#fff;box-shadow:inset 0 0 0 1px #333;"></div>
<div style="left:1197px;top:82px;width:13px;height:13px;background:#fff;box-shadow:inset 0 0 0 1px #333;"></div>
<span class="t" style="left:1080.0px;top:79px;letter-spacing:-0.003px;"><u>c</u>hildren</span>
<span class="t" style="left:1147.0px;top:79px;letter-spacing:-0.065px;"><u>s</u>iblings</span>
<span class="t" style="left:1213.2px;top:79px;letter-spacing:-0.063px;"><u>p</u>arent&#x27;s siblings</span>
<span class="t" style="left:1477.2px;top:80px;letter-spacing:-0.290px;">Legend</span>
<div style="left:507px;top:112px;width:1025px;height:1px;background:#696969;"></div>
<div style="left:507px;top:112px;width:1px;height:606px;background:#696969;"></div>
<div class="clip" style="left:508px;top:135px;width:1008px;height:567px">
<div style="left:0px;top:-4px;width:199px;height:19px;background:#ffffdd"></div>
<div style="left:200px;top:-4px;width:6px;height:19px;background:#ffffdd"></div>
<div style="left:207px;top:-4px;width:199px;height:19px;background:#ffffdd"></div>
<div style="left:407px;top:-4px;width:199px;height:19px;background:#ffffdd"></div>
<div style="left:607px;top:-4px;width:199px;height:19px;background:#ffffdd"></div>
<div style="left:807px;top:-4px;width:199px;height:19px;background:#ffffee"></div>
<div style="left:0;top:15px;width:1005px;height:1px;background:#ffffea"></div>
<div style="left:0px;top:16px;width:199px;height:19px;background:#ffffdd"></div>
<div style="left:200px;top:16px;width:6px;height:19px;background:#ffffdd"></div>
<div style="left:207px;top:16px;width:199px;height:19px;background:#ffffdd"></div>
<div style="left:407px;top:16px;width:199px;height:19px;background:#ffffdd"></div>
<div style="left:607px;top:16px;width:199px;height:19px;background:#ffffdd"></div>
<div style="left:807px;top:16px;width:199px;height:19px;background:#ffffee"></div>
<div style="left:0;top:35px;width:1005px;height:1px;background:#ffffea"></div>
<div style="left:0px;top:36px;width:199px;height:19px;background:#ffffdd"></div>
<div style="left:200px;top:36px;width:6px;height:19px;background:#ffffdd"></div>
<div style="left:207px;top:36px;width:199px;height:19px;background:#ffffdd"></div>
<div style="left:407px;top:36px;width:199px;height:19px;background:#ffffdd"></div>
<div style="left:607px;top:36px;width:199px;height:19px;background:#ffffdd"></div>
<div style="left:807px;top:36px;width:199px;height:19px;background:#ffffee"></div>
<div style="left:0;top:55px;width:1005px;height:1px;background:#ffffea"></div>
<div style="left:0px;top:56px;width:199px;height:19px;background:#ffffdd"></div>
<div style="left:200px;top:56px;width:6px;height:19px;background:#ffffdd"></div>
<div style="left:207px;top:56px;width:199px;height:19px;background:#ffffdd"></div>
<div style="left:407px;top:56px;width:199px;height:19px;background:#ffffdd"></div>
<div style="left:607px;top:56px;width:199px;height:19px;background:#ffffdd"></div>
<div style="left:807px;top:56px;width:199px;height:19px;background:#ffffee"></div>
<div style="left:0;top:75px;width:1005px;height:1px;background:#ffffea"></div>
<div style="left:0px;top:76px;width:199px;height:19px;background:#ffd7d7"></div>
<div style="left:200px;top:76px;width:6px;height:19px;background:#ffd7d7"></div>
<div style="left:207px;top:76px;width:199px;height:19px;background:#ffd7d7"></div>
<div style="left:407px;top:76px;width:199px;height:19px;background:#ffd7d7"></div>
<div style="left:607px;top:76px;width:199px;height:19px;background:#ffd7d7"></div>
<div style="left:807px;top:76px;width:199px;height:19px;background:#ffeaea"></div>
<div style="left:0;top:95px;width:1005px;height:1px;background:#ffe6e6"></div>
<div style="left:0px;top:96px;width:199px;height:19px;background:#ffffdd"></div>
<div style="left:200px;top:96px;width:6px;height:19px;background:#ffffdd"></div>
<div style="left:207px;top:96px;width:199px;height:19px;background:#ffffdd"></div>
<div style="left:407px;top:96px;width:199px;height:19px;background:#ffffdd"></div>
<div style="left:607px;top:96px;width:199px;height:19px;background:#ffffdd"></div>
<div style="left:807px;top:96px;width:199px;height:19px;background:#ffffee"></div>
<div style="left:0;top:115px;width:1005px;height:1px;background:#ffffea"></div>
<div style="left:0px;top:116px;width:199px;height:19px;background:#ffd7d7"></div>
<div style="left:200px;top:116px;width:6px;height:19px;background:#ffd7d7"></div>
<div style="left:207px;top:116px;width:199px;height:19px;background:#ffd7d7"></div>
<div style="left:407px;top:116px;width:199px;height:19px;background:#ffd7d7"></div>
<div style="left:607px;top:116px;width:199px;height:19px;background:#ffd7d7"></div>
<div style="left:807px;top:116px;width:199px;height:19px;background:#ffeaea"></div>
<div style="left:0;top:135px;width:1005px;height:1px;background:#ffe6e6"></div>
<div style="left:0px;top:136px;width:199px;height:19px;background:#ffffdd"></div>
<div style="left:200px;top:136px;width:6px;height:19px;background:#ffffdd"></div>
<div style="left:207px;top:136px;width:199px;height:19px;background:#ffffdd"></div>
<div style="left:407px;top:136px;width:199px;height:19px;background:#ffffdd"></div>
<div style="left:607px;top:136px;width:199px;height:19px;background:#ffffdd"></div>
<div style="left:807px;top:136px;width:199px;height:19px;background:#ffffee"></div>
<div style="left:0;top:155px;width:1005px;height:1px;background:#ffffea"></div>
<div style="left:0px;top:156px;width:199px;height:19px;background:#ffffdd"></div>
<div style="left:200px;top:156px;width:6px;height:19px;background:#ffffdd"></div>
<div style="left:207px;top:156px;width:199px;height:19px;background:#ffffdd"></div>
<div style="left:407px;top:156px;width:199px;height:19px;background:#ffffdd"></div>
<div style="left:607px;top:156px;width:199px;height:19px;background:#ffffdd"></div>
<div style="left:807px;top:156px;width:199px;height:19px;background:#ffffee"></div>
<div style="left:0;top:175px;width:1005px;height:1px;background:#ffffea"></div>
<div style="left:0px;top:176px;width:199px;height:19px;background:#ffffdd"></div>
<div style="left:200px;top:176px;width:6px;height:19px;background:#ffffdd"></div>
<div style="left:207px;top:176px;width:199px;height:19px;background:#ffffdd"></div>
<div style="left:407px;top:176px;width:199px;height:19px;background:#ffffdd"></div>
<div style="left:607px;top:176px;width:199px;height:19px;background:#ffffdd"></div>
<div style="left:807px;top:176px;width:199px;height:19px;background:#ffffee"></div>
<div style="left:0;top:195px;width:1005px;height:1px;background:#ffffea"></div>
<div style="left:0px;top:196px;width:199px;height:19px;background:#ffffdd"></div>
<div style="left:200px;top:196px;width:6px;height:19px;background:#ffffdd"></div>
<div style="left:207px;top:196px;width:199px;height:19px;background:#ffffdd"></div>
<div style="left:407px;top:196px;width:199px;height:19px;background:#ffffdd"></div>
<div style="left:607px;top:196px;width:199px;height:19px;background:#ffffdd"></div>
<div style="left:807px;top:196px;width:199px;height:19px;background:#ffffee"></div>
<div style="left:0;top:215px;width:1005px;height:1px;background:#ffffea"></div>
<div style="left:0px;top:216px;width:199px;height:19px;background:#ffffdd"></div>
<div style="left:200px;top:216px;width:6px;height:19px;background:#ffffdd"></div>
<div style="left:207px;top:216px;width:199px;height:19px;background:#ffffdd"></div>
<div style="left:407px;top:216px;width:199px;height:19px;background:#ffffdd"></div>
<div style="left:607px;top:216px;width:199px;height:19px;background:#ffffdd"></div>
<div style="left:807px;top:216px;width:199px;height:19px;background:#ffffee"></div>
<div style="left:0;top:235px;width:1005px;height:1px;background:#ffffea"></div>
<div style="left:0px;top:236px;width:199px;height:19px;background:#ffffdd"></div>
<div style="left:200px;top:236px;width:6px;height:19px;background:#ffffdd"></div>
<div style="left:207px;top:236px;width:199px;height:19px;background:#ffffdd"></div>
<div style="left:407px;top:236px;width:199px;height:19px;background:#ffffdd"></div>
<div style="left:607px;top:236px;width:199px;height:19px;background:#ffffdd"></div>
<div style="left:807px;top:236px;width:199px;height:19px;background:#ffffee"></div>
<div style="left:0;top:255px;width:1005px;height:1px;background:#ffffea"></div>
<div style="left:0px;top:256px;width:199px;height:19px;background:#ffffdd"></div>
<div style="left:200px;top:256px;width:6px;height:19px;background:#ffffdd"></div>
<div style="left:207px;top:256px;width:199px;height:19px;background:#ffffdd"></div>
<div style="left:407px;top:256px;width:199px;height:19px;background:#ffffdd"></div>
<div style="left:607px;top:256px;width:199px;height:19px;background:#ffffdd"></div>
<div style="left:807px;top:256px;width:199px;height:19px;background:#ffffee"></div>
<div style="left:0;top:275px;width:1005px;height:1px;background:#ffffea"></div>
<div style="left:0px;top:276px;width:199px;height:19px;background:#ffffdd"></div>
<div style="left:200px;top:276px;width:6px;height:19px;background:#ffffdd"></div>
<div style="left:207px;top:276px;width:199px;height:19px;background:#ffffdd"></div>
<div style="left:407px;top:276px;width:199px;height:19px;background:#ffffdd"></div>
<div style="left:607px;top:276px;width:199px;height:19px;background:#ffffdd"></div>
<div style="left:807px;top:276px;width:199px;height:19px;background:#ffffee"></div>
<div style="left:0;top:295px;width:1005px;height:1px;background:#ffffea"></div>
<div style="left:0px;top:296px;width:199px;height:19px;background:#ffffdd"></div>
<div style="left:200px;top:296px;width:6px;height:19px;background:#ffffdd"></div>
<div style="left:207px;top:296px;width:199px;height:19px;background:#ffffdd"></div>
<div style="left:407px;top:296px;width:199px;height:19px;background:#ffffdd"></div>
<div style="left:607px;top:296px;width:199px;height:19px;background:#ffffdd"></div>
<div style="left:807px;top:296px;width:199px;height:19px;background:#ffffee"></div>
<div style="left:0;top:315px;width:1005px;height:1px;background:#ffffea"></div>
<div style="left:0px;top:316px;width:199px;height:19px;background:#ffffdd"></div>
<div style="left:200px;top:316px;width:6px;height:19px;background:#ffffdd"></div>
<div style="left:207px;top:316px;width:199px;height:19px;background:#ffffdd"></div>
<div style="left:407px;top:316px;width:199px;height:19px;background:#ffffdd"></div>
<div style="left:607px;top:316px;width:199px;height:19px;background:#ffffdd"></div>
<div style="left:807px;top:316px;width:199px;height:19px;background:#ffffee"></div>
<div style="left:0;top:335px;width:1005px;height:1px;background:#ffffea"></div>
<div style="left:0px;top:336px;width:199px;height:19px;background:#ffffdd"></div>
<div style="left:200px;top:336px;width:6px;height:19px;background:#ffffdd"></div>
<div style="left:207px;top:336px;width:199px;height:19px;background:#ffffdd"></div>
<div style="left:407px;top:336px;width:199px;height:19px;background:#ffffdd"></div>
<div style="left:607px;top:336px;width:199px;height:19px;background:#ffffdd"></div>
<div style="left:807px;top:336px;width:199px;height:19px;background:#ffffee"></div>
<div style="left:0;top:355px;width:1005px;height:1px;background:#ffffea"></div>
<div style="left:0px;top:356px;width:199px;height:19px;background:#ffffdd"></div>
<div style="left:200px;top:356px;width:6px;height:19px;background:#ffffdd"></div>
<div style="left:207px;top:356px;width:199px;height:19px;background:#ffffdd"></div>
<div style="left:407px;top:356px;width:199px;height:19px;background:#ffffdd"></div>
<div style="left:607px;top:356px;width:199px;height:19px;background:#ffffdd"></div>
<div style="left:807px;top:356px;width:199px;height:19px;background:#ffffee"></div>
<div style="left:0;top:375px;width:1005px;height:1px;background:#ffffea"></div>
<div style="left:0px;top:376px;width:199px;height:19px;background:#ffd7d7"></div>
<div style="left:200px;top:376px;width:6px;height:19px;background:#ffd7d7"></div>
<div style="left:207px;top:376px;width:199px;height:19px;background:#ffd7d7"></div>
<div style="left:407px;top:376px;width:199px;height:19px;background:#ffd7d7"></div>
<div style="left:607px;top:376px;width:199px;height:19px;background:#ffd7d7"></div>
<div style="left:807px;top:376px;width:199px;height:19px;background:#ffeaea"></div>
<div style="left:0;top:395px;width:1005px;height:1px;background:#ffe6e6"></div>
<div style="left:0px;top:396px;width:199px;height:19px;background:#ffffdd"></div>
<div style="left:200px;top:396px;width:6px;height:19px;background:#ffffdd"></div>
<div style="left:207px;top:396px;width:199px;height:19px;background:#ffffdd"></div>
<div style="left:407px;top:396px;width:199px;height:19px;background:#ffffdd"></div>
<div style="left:607px;top:396px;width:199px;height:19px;background:#ffffdd"></div>
<div style="left:807px;top:396px;width:199px;height:19px;background:#ffffee"></div>
<div style="left:0;top:415px;width:1005px;height:1px;background:#ffffea"></div>
<div style="left:0px;top:416px;width:199px;height:19px;background:#ffd7d7"></div>
<div style="left:200px;top:416px;width:6px;height:19px;background:#ffd7d7"></div>
<div style="left:207px;top:416px;width:199px;height:19px;background:#ffd7d7"></div>
<div style="left:407px;top:416px;width:199px;height:19px;background:#ffd7d7"></div>
<div style="left:607px;top:416px;width:199px;height:19px;background:#ffd7d7"></div>
<div style="left:807px;top:416px;width:199px;height:19px;background:#ffeaea"></div>
<div style="left:0;top:435px;width:1005px;height:1px;background:#ffe6e6"></div>
<div style="left:0px;top:436px;width:199px;height:19px;background:#ffd7d7"></div>
<div style="left:200px;top:436px;width:6px;height:19px;background:#ffd7d7"></div>
<div style="left:207px;top:436px;width:199px;height:19px;background:#ffd7d7"></div>
<div style="left:407px;top:436px;width:199px;height:19px;background:#ffd7d7"></div>
<div style="left:607px;top:436px;width:199px;height:19px;background:#ffd7d7"></div>
<div style="left:807px;top:436px;width:199px;height:19px;background:#ffeaea"></div>
<div style="left:0;top:455px;width:1005px;height:1px;background:#ffe6e6"></div>
<div style="left:0px;top:456px;width:199px;height:19px;background:#ffffdd"></div>
<div style="left:200px;top:456px;width:6px;height:19px;background:#ffffdd"></div>
<div style="left:207px;top:456px;width:199px;height:19px;background:#ffffdd"></div>
<div style="left:407px;top:456px;width:199px;height:19px;background:#ffffdd"></div>
<div style="left:607px;top:456px;width:199px;height:19px;background:#ffffdd"></div>
<div style="left:807px;top:456px;width:199px;height:19px;background:#ffffee"></div>
<div style="left:0;top:475px;width:1005px;height:1px;background:#ffffea"></div>
<div style="left:0px;top:476px;width:199px;height:19px;background:#ffd7d7"></div>
<div style="left:200px;top:476px;width:6px;height:19px;background:#ffd7d7"></div>
<div style="left:207px;top:476px;width:199px;height:19px;background:#ffd7d7"></div>
<div style="left:407px;top:476px;width:199px;height:19px;background:#ffd7d7"></div>
<div style="left:607px;top:476px;width:199px;height:19px;background:#ffd7d7"></div>
<div style="left:807px;top:476px;width:199px;height:19px;background:#ffeaea"></div>
<div style="left:0;top:495px;width:1005px;height:1px;background:#ffe6e6"></div>
<div style="left:0px;top:496px;width:199px;height:19px;background:#ffffdd"></div>
<div style="left:200px;top:496px;width:6px;height:19px;background:#ffffdd"></div>
<div style="left:207px;top:496px;width:199px;height:19px;background:#ffffdd"></div>
<div style="left:407px;top:496px;width:199px;height:19px;background:#ffffdd"></div>
<div style="left:607px;top:496px;width:199px;height:19px;background:#ffffdd"></div>
<div style="left:807px;top:496px;width:199px;height:19px;background:#ffffee"></div>
<div style="left:0;top:515px;width:1005px;height:1px;background:#ffffea"></div>
<div style="left:0px;top:516px;width:199px;height:19px;background:#ffffdd"></div>
<div style="left:200px;top:516px;width:6px;height:19px;background:#ffffdd"></div>
<div style="left:207px;top:516px;width:199px;height:19px;background:#ffffdd"></div>
<div style="left:407px;top:516px;width:199px;height:19px;background:#ffffdd"></div>
<div style="left:607px;top:516px;width:199px;height:19px;background:#ffffdd"></div>
<div style="left:807px;top:516px;width:199px;height:19px;background:#ffffee"></div>
<div style="left:0;top:535px;width:1005px;height:1px;background:#ffffea"></div>
<div style="left:0px;top:536px;width:199px;height:19px;background:#ffffdd"></div>
<div style="left:200px;top:536px;width:6px;height:19px;background:#ffffdd"></div>
<div style="left:207px;top:536px;width:199px;height:19px;background:#ffffdd"></div>
<div style="left:407px;top:536px;width:199px;height:19px;background:#ffffdd"></div>
<div style="left:607px;top:536px;width:199px;height:19px;background:#ffffdd"></div>
<div style="left:807px;top:536px;width:199px;height:19px;background:#ffffee"></div>
<div style="left:0;top:555px;width:1005px;height:1px;background:#ffffea"></div>
<div style="left:0px;top:556px;width:199px;height:19px;background:#ffffdd"></div>
<div style="left:200px;top:556px;width:6px;height:19px;background:#ffffdd"></div>
<div style="left:207px;top:556px;width:199px;height:19px;background:#ffffdd"></div>
<div style="left:407px;top:556px;width:199px;height:19px;background:#ffffdd"></div>
<div style="left:607px;top:556px;width:199px;height:19px;background:#ffffdd"></div>
<div style="left:807px;top:556px;width:199px;height:19px;background:#ffffee"></div>
<div style="left:0;top:575px;width:1005px;height:1px;background:#ffffea"></div>
<div style="left:406px;top:0;width:1px;height:567px;background:rgba(255,255,255,.3)"></div>
<div style="left:606px;top:0;width:1px;height:567px;background:rgba(255,255,255,.3)"></div>
<div style="left:806px;top:0;width:1px;height:567px;background:rgba(255,255,255,.3)"></div>
<div style="left:1005px;top:0;width:3px;height:567px;background:#fff"></div>
<div style="left:199px;top:0px;width:1px;height:567px;background:repeating-linear-gradient(to bottom,#a8a8a8 0 1px,transparent 1px 2px);background-position:0 0px"></div>
<div style="left:56px;top:0px;width:1px;height:567px;background:repeating-linear-gradient(to bottom,#a6a6a6 0 1px,transparent 1px 2px);background-position:0 0px"></div>
<div style="left:77px;top:6px;width:12px;height:1px;background:repeating-linear-gradient(to right,#a6a6a6 0 1px,transparent 1px 2px)"></div>
<span class="t" style="left:92.1px;top:-4px;color:#168016;letter-spacing:-0.029px;">Combined Mesh</span>
<span class="t" style="left:218.7px;top:-4px;color:#808080;letter-spacing:0.130px;">Precombined\</span>
<span class="t" style="left:294.7px;top:-4px;color:#808080;letter-spacing:-0.400px;transform:scaleX(0.9442);transform-origin:0 0;">0004280D_80099B...</span>
<span class="t" style="left:418.7px;top:-4px;color:#808080;letter-spacing:0.130px;">Precombined\</span>
<span class="t" style="left:494.7px;top:-4px;color:#808080;letter-spacing:-0.400px;transform:scaleX(0.9442);transform-origin:0 0;">0004280D_80099B...</span>
<span class="t" style="left:618.7px;top:-4px;color:#808080;letter-spacing:0.130px;">Precombined\</span>
<span class="t" style="left:694.7px;top:-4px;color:#808080;letter-spacing:-0.400px;transform:scaleX(0.9442);transform-origin:0 0;">0004280D_80099B...</span>
<svg style="left:52px;top:22px" width="9" height="9" viewBox="0 0 9 9"><rect x=".5" y=".5" width="8" height="8" fill="url(#bg)" stroke="#8f8f8f"/><g stroke="#24356b" stroke-width="1" fill="none"><path d="M2.500 4.500h4"/></g></svg>
<div style="left:62px;top:26px;width:7px;height:1px;background:repeating-linear-gradient(to right,#a6a6a6 0 1px,transparent 1px 2px)"></div>
<span class="t" style="left:72.0px;top:16px;color:#168016;letter-spacing:-0.318px;">Reference</span>
<div style="left:76px;top:36px;width:1px;height:31px;background:repeating-linear-gradient(to bottom,#a6a6a6 0 1px,transparent 1px 2px);background-position:0 0px"></div>
<div style="left:77px;top:46px;width:12px;height:1px;background:repeating-linear-gradient(to right,#a6a6a6 0 1px,transparent 1px 2px)"></div>
<span class="t" style="left:92.1px;top:36px;color:#168016;letter-spacing:-0.318px;">Reference</span>
<span class="t" style="left:219.0px;top:36px;color:#808080;letter-spacing:-0.400px;transform:scaleX(0.8995);transform-origin:0 0;">[REFR:001082ED]</span>
<span class="t" style="left:307.3px;top:36px;color:#808080;letter-spacing:-0.280px;">(places Shelf_Bi...</span>
<span class="t" style="left:419.0px;top:36px;color:#808080;letter-spacing:-0.400px;transform:scaleX(0.8995);transform-origin:0 0;">[REFR:001082ED]</span>
<span class="t" style="left:507.3px;top:36px;color:#808080;letter-spacing:-0.280px;">(places Shelf_Bi...</span>
<span class="t" style="left:619.0px;top:36px;color:#808080;letter-spacing:-0.400px;transform:scaleX(0.8995);transform-origin:0 0;">[REFR:001082ED]</span>
<span class="t" style="left:707.3px;top:36px;color:#808080;letter-spacing:-0.280px;">(places Shelf_Bi...</span>
<div style="left:77px;top:66px;width:12px;height:1px;background:repeating-linear-gradient(to right,#a6a6a6 0 1px,transparent 1px 2px)"></div>
<span class="t" style="left:92.1px;top:56px;color:#168016;letter-spacing:-0.029px;">Combined Mesh</span>
<span class="t" style="left:218.7px;top:56px;color:#808080;letter-spacing:0.130px;">Precombined\</span>
<span class="t" style="left:294.7px;top:56px;color:#808080;letter-spacing:-0.400px;transform:scaleX(0.9442);transform-origin:0 0;">0004280D_80099B...</span>
<span class="t" style="left:418.7px;top:56px;color:#808080;letter-spacing:0.130px;">Precombined\</span>
<span class="t" style="left:494.7px;top:56px;color:#808080;letter-spacing:-0.400px;transform:scaleX(0.9442);transform-origin:0 0;">0004280D_80099B...</span>
<span class="t" style="left:618.7px;top:56px;color:#808080;letter-spacing:0.130px;">Precombined\</span>
<span class="t" style="left:694.7px;top:56px;color:#808080;letter-spacing:-0.400px;transform:scaleX(0.9442);transform-origin:0 0;">0004280D_80099B...</span>
<svg style="left:52px;top:82px" width="9" height="9" viewBox="0 0 9 9"><rect x=".5" y=".5" width="8" height="8" fill="url(#bg)" stroke="#8f8f8f"/><g stroke="#24356b" stroke-width="1" fill="none"><path d="M2.500 4.500h4"/></g></svg>
<div style="left:62px;top:86px;width:7px;height:1px;background:repeating-linear-gradient(to right,#a6a6a6 0 1px,transparent 1px 2px)"></div>
<span class="t" style="left:72.0px;top:76px;color:#d01030;letter-spacing:-0.318px;">Reference</span>
<div style="left:76px;top:96px;width:1px;height:31px;background:repeating-linear-gradient(to bottom,#a6a6a6 0 1px,transparent 1px 2px);background-position:0 0px"></div>
<div style="left:77px;top:106px;width:12px;height:1px;background:repeating-linear-gradient(to right,#a6a6a6 0 1px,transparent 1px 2px)"></div>
<span class="t" style="left:92.1px;top:96px;color:#168016;letter-spacing:-0.318px;">Reference</span>
<span class="t" style="left:219.0px;top:96px;color:#808080;letter-spacing:-0.400px;transform:scaleX(0.9260);transform-origin:0 0;">[REFR:001082F2]</span>
<span class="t" style="left:307.3px;top:96px;color:#808080;letter-spacing:-0.135px;">(places HitFloor...</span>
<span class="t" style="left:419.0px;top:96px;color:#808080;letter-spacing:-0.400px;transform:scaleX(0.9260);transform-origin:0 0;">[REFR:001082F2]</span>
<span class="t" style="left:507.3px;top:96px;color:#808080;letter-spacing:-0.135px;">(places HitFloor...</span>
<span class="t" style="left:619.0px;top:96px;color:#808080;letter-spacing:-0.400px;transform:scaleX(0.9260);transform-origin:0 0;">[REFR:001082F2]</span>
<span class="t" style="left:707.3px;top:96px;color:#808080;letter-spacing:-0.135px;">(places HitFloor...</span>
<div style="left:77px;top:126px;width:12px;height:1px;background:repeating-linear-gradient(to right,#a6a6a6 0 1px,transparent 1px 2px)"></div>
<span class="t" style="left:92.1px;top:116px;color:#d01030;letter-spacing:-0.029px;">Combined Mesh</span>
<span class="t" style="left:218.7px;top:116px;color:#d01030;letter-spacing:0.130px;">Precombined\</span>
<span class="t" style="left:294.7px;top:116px;color:#d01030;letter-spacing:-0.400px;transform:scaleX(0.9442);transform-origin:0 0;">0004280D_5495E0...</span>
<span class="t" style="left:418.7px;top:116px;color:#d01030;letter-spacing:0.130px;">Precombined\</span>
<span class="t" style="left:494.7px;top:116px;color:#d01030;letter-spacing:-0.400px;transform:scaleX(0.9442);transform-origin:0 0;">0004280D_5495E0...</span>
<span class="t" style="left:618.7px;top:116px;color:#d01030;letter-spacing:0.130px;">Precombined\</span>
<span class="t" style="left:694.7px;top:116px;color:#d01030;letter-spacing:-0.400px;transform:scaleX(0.9442);transform-origin:0 0;">0004280D_5495E0...</span>
<svg style="left:52px;top:142px" width="9" height="9" viewBox="0 0 9 9"><rect x=".5" y=".5" width="8" height="8" fill="url(#bg)" stroke="#8f8f8f"/><g stroke="#24356b" stroke-width="1" fill="none"><path d="M2.500 4.500h4"/></g></svg>
<div style="left:62px;top:146px;width:7px;height:1px;background:repeating-linear-gradient(to right,#a6a6a6 0 1px,transparent 1px 2px)"></div>
<span class="t" style="left:72.0px;top:136px;color:#168016;letter-spacing:-0.318px;">Reference</span>
<div style="left:76px;top:156px;width:1px;height:31px;background:repeating-linear-gradient(to bottom,#a6a6a6 0 1px,transparent 1px 2px);background-position:0 0px"></div>
<div style="left:77px;top:166px;width:12px;height:1px;background:repeating-linear-gradient(to right,#a6a6a6 0 1px,transparent 1px 2px)"></div>
<span class="t" style="left:92.1px;top:156px;color:#168016;letter-spacing:-0.318px;">Reference</span>
<span class="t" style="left:219.0px;top:156px;color:#808080;letter-spacing:-0.400px;transform:scaleX(0.9260);transform-origin:0 0;">[REFR:001082F3]</span>
<span class="t" style="left:307.3px;top:156px;color:#808080;letter-spacing:-0.135px;">(places HitFloor...</span>
<span class="t" style="left:419.0px;top:156px;color:#808080;letter-spacing:-0.400px;transform:scaleX(0.9260);transform-origin:0 0;">[REFR:001082F3]</span>
<span class="t" style="left:507.3px;top:156px;color:#808080;letter-spacing:-0.135px;">(places HitFloor...</span>
<span class="t" style="left:619.0px;top:156px;color:#808080;letter-spacing:-0.400px;transform:scaleX(0.9260);transform-origin:0 0;">[REFR:001082F3]</span>
<span class="t" style="left:707.3px;top:156px;color:#808080;letter-spacing:-0.135px;">(places HitFloor...</span>
<div style="left:77px;top:186px;width:12px;height:1px;background:repeating-linear-gradient(to right,#a6a6a6 0 1px,transparent 1px 2px)"></div>
<span class="t" style="left:92.1px;top:176px;color:#168016;letter-spacing:-0.029px;">Combined Mesh</span>
<span class="t" style="left:218.7px;top:176px;color:#808080;letter-spacing:0.130px;">Precombined\</span>
<span class="t" style="left:294.7px;top:176px;color:#808080;letter-spacing:-0.400px;transform:scaleX(0.9442);transform-origin:0 0;">0004280D_80099B...</span>
<span class="t" style="left:418.7px;top:176px;color:#808080;letter-spacing:0.130px;">Precombined\</span>
<span class="t" style="left:494.7px;top:176px;color:#808080;letter-spacing:-0.400px;transform:scaleX(0.9442);transform-origin:0 0;">0004280D_80099B...</span>
<span class="t" style="left:618.7px;top:176px;color:#808080;letter-spacing:0.130px;">Precombined\</span>
<span class="t" style="left:694.7px;top:176px;color:#808080;letter-spacing:-0.400px;transform:scaleX(0.9442);transform-origin:0 0;">0004280D_80099B...</span>
<svg style="left:52px;top:202px" width="9" height="9" viewBox="0 0 9 9"><rect x=".5" y=".5" width="8" height="8" fill="url(#bg)" stroke="#8f8f8f"/><g stroke="#24356b" stroke-width="1" fill="none"><path d="M2.500 4.500h4"/></g></svg>
<div style="left:62px;top:206px;width:7px;height:1px;background:repeating-linear-gradient(to right,#a6a6a6 0 1px,transparent 1px 2px)"></div>
<span class="t" style="left:72.0px;top:196px;color:#168016;letter-spacing:-0.318px;">Reference</span>
<div style="left:76px;top:216px;width:1px;height:31px;background:repeating-linear-gradient(to bottom,#a6a6a6 0 1px,transparent 1px 2px);background-position:0 0px"></div>
<div style="left:77px;top:226px;width:12px;height:1px;background:repeating-linear-gradient(to right,#a6a6a6 0 1px,transparent 1px 2px)"></div>
<span class="t" style="left:92.1px;top:216px;color:#168016;letter-spacing:-0.318px;">Reference</span>
<span class="t" style="left:219.0px;top:216px;color:#808080;letter-spacing:-0.400px;transform:scaleX(0.9260);transform-origin:0 0;">[REFR:001082F4]</span>
<span class="t" style="left:307.3px;top:216px;color:#808080;letter-spacing:-0.135px;">(places HitFloor...</span>
<span class="t" style="left:419.0px;top:216px;color:#808080;letter-spacing:-0.400px;transform:scaleX(0.9260);transform-origin:0 0;">[REFR:001082F4]</span>
<span class="t" style="left:507.3px;top:216px;color:#808080;letter-spacing:-0.135px;">(places HitFloor...</span>
<span class="t" style="left:619.0px;top:216px;color:#808080;letter-spacing:-0.400px;transform:scaleX(0.9260);transform-origin:0 0;">[REFR:001082F4]</span>
<span class="t" style="left:707.3px;top:216px;color:#808080;letter-spacing:-0.135px;">(places HitFloor...</span>
<div style="left:77px;top:246px;width:12px;height:1px;background:repeating-linear-gradient(to right,#a6a6a6 0 1px,transparent 1px 2px)"></div>
<span class="t" style="left:92.1px;top:236px;color:#168016;letter-spacing:-0.029px;">Combined Mesh</span>
<span class="t" style="left:218.7px;top:236px;color:#808080;letter-spacing:0.130px;">Precombined\</span>
<span class="t" style="left:294.7px;top:236px;color:#808080;letter-spacing:-0.400px;transform:scaleX(0.9442);transform-origin:0 0;">0004280D_00099B...</span>
<span class="t" style="left:418.7px;top:236px;color:#808080;letter-spacing:0.130px;">Precombined\</span>
<span class="t" style="left:494.7px;top:236px;color:#808080;letter-spacing:-0.400px;transform:scaleX(0.9442);transform-origin:0 0;">0004280D_00099B...</span>
<span class="t" style="left:618.7px;top:236px;color:#808080;letter-spacing:0.130px;">Precombined\</span>
<span class="t" style="left:694.7px;top:236px;color:#808080;letter-spacing:-0.400px;transform:scaleX(0.9442);transform-origin:0 0;">0004280D_00099B...</span>
<svg style="left:52px;top:262px" width="9" height="9" viewBox="0 0 9 9"><rect x=".5" y=".5" width="8" height="8" fill="url(#bg)" stroke="#8f8f8f"/><g stroke="#24356b" stroke-width="1" fill="none"><path d="M2.500 4.500h4"/></g></svg>
<div style="left:62px;top:266px;width:7px;height:1px;background:repeating-linear-gradient(to right,#a6a6a6 0 1px,transparent 1px 2px)"></div>
<span class="t" style="left:72.0px;top:256px;color:#168016;letter-spacing:-0.318px;">Reference</span>
<div style="left:76px;top:276px;width:1px;height:31px;background:repeating-linear-gradient(to bottom,#a6a6a6 0 1px,transparent 1px 2px);background-position:0 0px"></div>
<div style="left:77px;top:286px;width:12px;height:1px;background:repeating-linear-gradient(to right,#a6a6a6 0 1px,transparent 1px 2px)"></div>
<span class="t" style="left:92.1px;top:276px;color:#168016;letter-spacing:-0.318px;">Reference</span>
<span class="t" style="left:219.0px;top:276px;color:#808080;letter-spacing:-0.400px;transform:scaleX(0.9260);transform-origin:0 0;">[REFR:001082F6]</span>
<span class="t" style="left:307.3px;top:276px;color:#808080;letter-spacing:-0.208px;">(places HitDebri...</span>
<span class="t" style="left:419.0px;top:276px;color:#808080;letter-spacing:-0.400px;transform:scaleX(0.9260);transform-origin:0 0;">[REFR:001082F6]</span>
<span class="t" style="left:507.3px;top:276px;color:#808080;letter-spacing:-0.208px;">(places HitDebri...</span>
<span class="t" style="left:619.0px;top:276px;color:#808080;letter-spacing:-0.400px;transform:scaleX(0.9260);transform-origin:0 0;">[REFR:001082F6]</span>
<span class="t" style="left:707.3px;top:276px;color:#808080;letter-spacing:-0.208px;">(places HitDebri...</span>
<div style="left:77px;top:306px;width:12px;height:1px;background:repeating-linear-gradient(to right,#a6a6a6 0 1px,transparent 1px 2px)"></div>
<span class="t" style="left:92.1px;top:296px;color:#168016;letter-spacing:-0.029px;">Combined Mesh</span>
<span class="t" style="left:218.7px;top:296px;color:#808080;letter-spacing:0.130px;">Precombined\</span>
<span class="t" style="left:294.7px;top:296px;color:#808080;letter-spacing:-0.400px;transform:scaleX(0.9442);transform-origin:0 0;">0004280D_00099B...</span>
<span class="t" style="left:418.7px;top:296px;color:#808080;letter-spacing:0.130px;">Precombined\</span>
<span class="t" style="left:494.7px;top:296px;color:#808080;letter-spacing:-0.400px;transform:scaleX(0.9442);transform-origin:0 0;">0004280D_00099B...</span>
<span class="t" style="left:618.7px;top:296px;color:#808080;letter-spacing:0.130px;">Precombined\</span>
<span class="t" style="left:694.7px;top:296px;color:#808080;letter-spacing:-0.400px;transform:scaleX(0.9442);transform-origin:0 0;">0004280D_00099B...</span>
<svg style="left:52px;top:322px" width="9" height="9" viewBox="0 0 9 9"><rect x=".5" y=".5" width="8" height="8" fill="url(#bg)" stroke="#8f8f8f"/><g stroke="#24356b" stroke-width="1" fill="none"><path d="M2.500 4.500h4"/></g></svg>
<div style="left:62px;top:326px;width:7px;height:1px;background:repeating-linear-gradient(to right,#a6a6a6 0 1px,transparent 1px 2px)"></div>
<span class="t" style="left:72.0px;top:316px;color:#168016;letter-spacing:-0.318px;">Reference</span>
<div style="left:76px;top:336px;width:1px;height:31px;background:repeating-linear-gradient(to bottom,#a6a6a6 0 1px,transparent 1px 2px);background-position:0 0px"></div>
<div style="left:77px;top:346px;width:12px;height:1px;background:repeating-linear-gradient(to right,#a6a6a6 0 1px,transparent 1px 2px)"></div>
<span class="t" style="left:92.1px;top:336px;color:#168016;letter-spacing:-0.318px;">Reference</span>
<span class="t" style="left:219.0px;top:336px;color:#808080;letter-spacing:-0.400px;transform:scaleX(0.9260);transform-origin:0 0;">[REFR:001082F7]</span>
<span class="t" style="left:307.3px;top:336px;color:#808080;letter-spacing:-0.146px;">(places HitWind...</span>
<span class="t" style="left:419.0px;top:336px;color:#808080;letter-spacing:-0.400px;transform:scaleX(0.9260);transform-origin:0 0;">[REFR:001082F7]</span>
<span class="t" style="left:507.3px;top:336px;color:#808080;letter-spacing:-0.146px;">(places HitWind...</span>
<span class="t" style="left:619.0px;top:336px;color:#808080;letter-spacing:-0.400px;transform:scaleX(0.9260);transform-origin:0 0;">[REFR:001082F7]</span>
<span class="t" style="left:707.3px;top:336px;color:#808080;letter-spacing:-0.146px;">(places HitWind...</span>
<div style="left:77px;top:366px;width:12px;height:1px;background:repeating-linear-gradient(to right,#a6a6a6 0 1px,transparent 1px 2px)"></div>
<span class="t" style="left:92.1px;top:356px;color:#168016;letter-spacing:-0.029px;">Combined Mesh</span>
<span class="t" style="left:218.7px;top:356px;color:#808080;letter-spacing:0.130px;">Precombined\</span>
<span class="t" style="left:294.7px;top:356px;color:#808080;letter-spacing:-0.400px;transform:scaleX(0.9442);transform-origin:0 0;">0004280D_80099B...</span>
<span class="t" style="left:418.7px;top:356px;color:#808080;letter-spacing:0.130px;">Precombined\</span>
<span class="t" style="left:494.7px;top:356px;color:#808080;letter-spacing:-0.400px;transform:scaleX(0.9442);transform-origin:0 0;">0004280D_80099B...</span>
<span class="t" style="left:618.7px;top:356px;color:#808080;letter-spacing:0.130px;">Precombined\</span>
<span class="t" style="left:694.7px;top:356px;color:#808080;letter-spacing:-0.400px;transform:scaleX(0.9442);transform-origin:0 0;">0004280D_80099B...</span>
<svg style="left:52px;top:382px" width="9" height="9" viewBox="0 0 9 9"><rect x=".5" y=".5" width="8" height="8" fill="url(#bg)" stroke="#8f8f8f"/><g stroke="#24356b" stroke-width="1" fill="none"><path d="M2.500 4.500h4"/></g></svg>
<div style="left:62px;top:386px;width:7px;height:1px;background:repeating-linear-gradient(to right,#a6a6a6 0 1px,transparent 1px 2px)"></div>
<span class="t" style="left:72.0px;top:376px;color:#d01030;letter-spacing:-0.318px;">Reference</span>
<div style="left:76px;top:396px;width:1px;height:31px;background:repeating-linear-gradient(to bottom,#a6a6a6 0 1px,transparent 1px 2px);background-position:0 0px"></div>
<div style="left:77px;top:406px;width:12px;height:1px;background:repeating-linear-gradient(to right,#a6a6a6 0 1px,transparent 1px 2px)"></div>
<span class="t" style="left:92.1px;top:396px;color:#168016;letter-spacing:-0.318px;">Reference</span>
<span class="t" style="left:219.0px;top:396px;color:#808080;letter-spacing:-0.400px;transform:scaleX(0.9260);transform-origin:0 0;">[REFR:001082F8]</span>
<span class="t" style="left:307.3px;top:396px;color:#808080;letter-spacing:-0.146px;">(places HitWind...</span>
<span class="t" style="left:419.0px;top:396px;color:#808080;letter-spacing:-0.400px;transform:scaleX(0.9260);transform-origin:0 0;">[REFR:001082F8]</span>
<span class="t" style="left:507.3px;top:396px;color:#808080;letter-spacing:-0.146px;">(places HitWind...</span>
<span class="t" style="left:619.0px;top:396px;color:#808080;letter-spacing:-0.400px;transform:scaleX(0.9260);transform-origin:0 0;">[REFR:001082F8]</span>
<span class="t" style="left:707.3px;top:396px;color:#808080;letter-spacing:-0.146px;">(places HitWind...</span>
<div style="left:77px;top:426px;width:12px;height:1px;background:repeating-linear-gradient(to right,#a6a6a6 0 1px,transparent 1px 2px)"></div>
<span class="t" style="left:92.1px;top:416px;color:#d01030;letter-spacing:-0.029px;">Combined Mesh</span>
<span class="t" style="left:218.7px;top:416px;color:#d01030;letter-spacing:0.130px;">Precombined\</span>
<span class="t" style="left:294.7px;top:416px;color:#d01030;letter-spacing:-0.400px;transform:scaleX(0.9442);transform-origin:0 0;">0004280D_00099B...</span>
<span class="t" style="left:418.7px;top:416px;color:#d01030;letter-spacing:0.130px;">Precombined\</span>
<span class="t" style="left:494.7px;top:416px;color:#d01030;letter-spacing:-0.400px;transform:scaleX(0.9442);transform-origin:0 0;">0004280D_00099B...</span>
<span class="t" style="left:618.7px;top:416px;color:#d01030;letter-spacing:0.130px;">Precombined\</span>
<span class="t" style="left:694.7px;top:416px;color:#d01030;letter-spacing:-0.400px;transform:scaleX(0.9442);transform-origin:0 0;">0004280D_00099B...</span>
<svg style="left:52px;top:442px" width="9" height="9" viewBox="0 0 9 9"><rect x=".5" y=".5" width="8" height="8" fill="url(#bg)" stroke="#8f8f8f"/><g stroke="#24356b" stroke-width="1" fill="none"><path d="M2.500 4.500h4"/></g></svg>
<div style="left:62px;top:446px;width:7px;height:1px;background:repeating-linear-gradient(to right,#a6a6a6 0 1px,transparent 1px 2px)"></div>
<span class="t" style="left:72.0px;top:436px;color:#d01030;letter-spacing:-0.318px;">Reference</span>
<div style="left:76px;top:456px;width:1px;height:31px;background:repeating-linear-gradient(to bottom,#a6a6a6 0 1px,transparent 1px 2px);background-position:0 0px"></div>
<div style="left:77px;top:466px;width:12px;height:1px;background:repeating-linear-gradient(to right,#a6a6a6 0 1px,transparent 1px 2px)"></div>
<span class="t" style="left:92.1px;top:456px;color:#168016;letter-spacing:-0.318px;">Reference</span>
<span class="t" style="left:219.0px;top:456px;color:#808080;letter-spacing:-0.400px;transform:scaleX(0.9260);transform-origin:0 0;">[REFR:001082F9]</span>
<span class="t" style="left:307.3px;top:456px;color:#808080;letter-spacing:-0.146px;">(places HitWind...</span>
<span class="t" style="left:419.0px;top:456px;color:#808080;letter-spacing:-0.400px;transform:scaleX(0.9260);transform-origin:0 0;">[REFR:001082F9]</span>
<span class="t" style="left:507.3px;top:456px;color:#808080;letter-spacing:-0.146px;">(places HitWind...</span>
<span class="t" style="left:619.0px;top:456px;color:#808080;letter-spacing:-0.400px;transform:scaleX(0.9260);transform-origin:0 0;">[REFR:001082F9]</span>
<span class="t" style="left:707.3px;top:456px;color:#808080;letter-spacing:-0.146px;">(places HitWind...</span>
<div style="left:77px;top:486px;width:12px;height:1px;background:repeating-linear-gradient(to right,#a6a6a6 0 1px,transparent 1px 2px)"></div>
<span class="t" style="left:92.1px;top:476px;color:#d01030;letter-spacing:-0.029px;">Combined Mesh</span>
<span class="t" style="left:218.7px;top:476px;color:#d01030;letter-spacing:0.130px;">Precombined\</span>
<span class="t" style="left:294.7px;top:476px;color:#d01030;letter-spacing:-0.400px;transform:scaleX(0.9442);transform-origin:0 0;">0004280D_00099B...</span>
<span class="t" style="left:418.7px;top:476px;color:#d01030;letter-spacing:0.130px;">Precombined\</span>
<span class="t" style="left:494.7px;top:476px;color:#d01030;letter-spacing:-0.400px;transform:scaleX(0.9442);transform-origin:0 0;">0004280D_00099B...</span>
<span class="t" style="left:618.7px;top:476px;color:#d01030;letter-spacing:0.130px;">Precombined\</span>
<span class="t" style="left:694.7px;top:476px;color:#d01030;letter-spacing:-0.400px;transform:scaleX(0.9442);transform-origin:0 0;">0004280D_00099B...</span>
<svg style="left:52px;top:502px" width="9" height="9" viewBox="0 0 9 9"><rect x=".5" y=".5" width="8" height="8" fill="url(#bg)" stroke="#8f8f8f"/><g stroke="#24356b" stroke-width="1" fill="none"><path d="M2.500 4.500h4"/></g></svg>
<div style="left:62px;top:506px;width:7px;height:1px;background:repeating-linear-gradient(to right,#a6a6a6 0 1px,transparent 1px 2px)"></div>
<span class="t" style="left:72.0px;top:496px;color:#168016;letter-spacing:-0.318px;">Reference</span>
<div style="left:76px;top:516px;width:1px;height:31px;background:repeating-linear-gradient(to bottom,#a6a6a6 0 1px,transparent 1px 2px);background-position:0 0px"></div>
<div style="left:77px;top:526px;width:12px;height:1px;background:repeating-linear-gradient(to right,#a6a6a6 0 1px,transparent 1px 2px)"></div>
<span class="t" style="left:92.1px;top:516px;color:#168016;letter-spacing:-0.318px;">Reference</span>
<span class="t" style="left:219.0px;top:516px;color:#808080;letter-spacing:-0.400px;transform:scaleX(0.9327);transform-origin:0 0;">[REFR:00108302]</span>
<span class="t" style="left:307.3px;top:516px;color:#808080;letter-spacing:-0.349px;">(places Fluoresc...</span>
<span class="t" style="left:419.0px;top:516px;color:#808080;letter-spacing:-0.400px;transform:scaleX(0.9327);transform-origin:0 0;">[REFR:00108302]</span>
<span class="t" style="left:507.3px;top:516px;color:#808080;letter-spacing:-0.349px;">(places Fluoresc...</span>
<span class="t" style="left:619.0px;top:516px;color:#808080;letter-spacing:-0.400px;transform:scaleX(0.9327);transform-origin:0 0;">[REFR:00108302]</span>
<span class="t" style="left:707.3px;top:516px;color:#808080;letter-spacing:-0.349px;">(places Fluoresc...</span>
<div style="left:77px;top:546px;width:12px;height:1px;background:repeating-linear-gradient(to right,#a6a6a6 0 1px,transparent 1px 2px)"></div>
<span class="t" style="left:92.1px;top:536px;color:#168016;letter-spacing:-0.029px;">Combined Mesh</span>
<span class="t" style="left:218.7px;top:536px;color:#808080;letter-spacing:0.130px;">Precombined\</span>
<span class="t" style="left:294.7px;top:536px;color:#808080;letter-spacing:-0.400px;transform:scaleX(0.9442);transform-origin:0 0;">0004280D_00099B...</span>
<span class="t" style="left:418.7px;top:536px;color:#808080;letter-spacing:0.130px;">Precombined\</span>
<span class="t" style="left:494.7px;top:536px;color:#808080;letter-spacing:-0.400px;transform:scaleX(0.9442);transform-origin:0 0;">0004280D_00099B...</span>
<span class="t" style="left:618.7px;top:536px;color:#808080;letter-spacing:0.130px;">Precombined\</span>
<span class="t" style="left:694.7px;top:536px;color:#808080;letter-spacing:-0.400px;transform:scaleX(0.9442);transform-origin:0 0;">0004280D_00099B...</span>
<svg style="left:52px;top:562px" width="9" height="9" viewBox="0 0 9 9"><rect x=".5" y=".5" width="8" height="8" fill="url(#bg)" stroke="#8f8f8f"/><g stroke="#24356b" stroke-width="1" fill="none"><path d="M2.500 4.500h4"/></g></svg>
<div style="left:62px;top:566px;width:7px;height:1px;background:repeating-linear-gradient(to right,#a6a6a6 0 1px,transparent 1px 2px)"></div>
<span class="t" style="left:72.0px;top:556px;color:#168016;letter-spacing:-0.318px;">Reference</span>
<div style="left:76px;top:0px;width:1px;height:7px;background:repeating-linear-gradient(to bottom,#a6a6a6 0 1px,transparent 1px 2px);background-position:0 0px"></div>
</div>
<div style="left:508px;top:113px;width:1024px;height:22px;background:#fff;"></div>
<div style="left:707px;top:113px;width:1px;height:22px;background:#e5e5e5;"></div>
<div style="left:714px;top:113px;width:1px;height:22px;background:#e5e5e5;"></div>
<div style="left:914px;top:113px;width:1px;height:22px;background:#e5e5e5;"></div>
<div style="left:1114px;top:113px;width:1px;height:22px;background:#e5e5e5;"></div>
<div style="left:1314px;top:113px;width:1px;height:22px;background:#e5e5e5;"></div>
<div style="left:1514px;top:113px;width:1px;height:22px;background:#e5e5e5;"></div>
<span class="t" style="left:721.2px;top:116px;color:#c0142c;letter-spacing:-0.234px;">[B6] Z_Horizon.esp</span>
<span class="t" style="left:921.2px;top:116px;color:#c0142c;letter-spacing:-0.362px;">[B7] Z_Horizon_DLC_All.esp</span>
<span class="t" style="left:1121.2px;top:116px;color:#c0142c;letter-spacing:-0.400px;transform:scaleX(0.9790);transform-origin:0 0;">[DF] Z_Extras.esp</span>
<span class="t" style="left:1320.9px;top:116px;color:#e08a68;letter-spacing:-0.062px;">[E1] problemsofsurvivor.esp</span>
<div style="left:1516px;top:135px;width:16px;height:567px;background:#f0f0f0;"></div>
<div style="left:1517px;top:360px;width:14px;height:17px;background:#cdcdcd;"></div>
<svg style="left:1520px;top:142.6px" width="7" height="6" viewBox="0 0 7 6"><path d="M0 3.500L3.500 0 7 3.500V5.900L3.500 2.400 0 5.900z" fill="#505050"/></svg>
<svg style="left:1520px;top:690px" width="7" height="6" viewBox="0 0 7 6"><path d="M0 2.400L3.500 5.900 7 2.400V0L3.500 3.500 0 0z" fill="#505050"/></svg>
<div style="left:508px;top:702px;width:1007px;height:16px;background:#f0f0f0;"></div>
<div style="left:1515px;top:702px;width:17px;height:16px;background:#f0f0f0;"></div>
<div style="left:885px;top:703px;width:613px;height:14px;background:#cdcdcd;"></div>
<svg style="left:513px;top:706px" width="6" height="7" viewBox="0 0 6 7"><path d="M3.500 0L0 3.500 3.500 7H5.900L2.400 3.500 5.900 0z" fill="#505050"/></svg>
<svg style="left:1504px;top:706px" width="6" height="7" viewBox="0 0 6 7"><path d="M2.400 0L5.900 3.500 2.400 7H0L3.500 3.500 0 0z" fill="#505050"/></svg>
</body></html>
